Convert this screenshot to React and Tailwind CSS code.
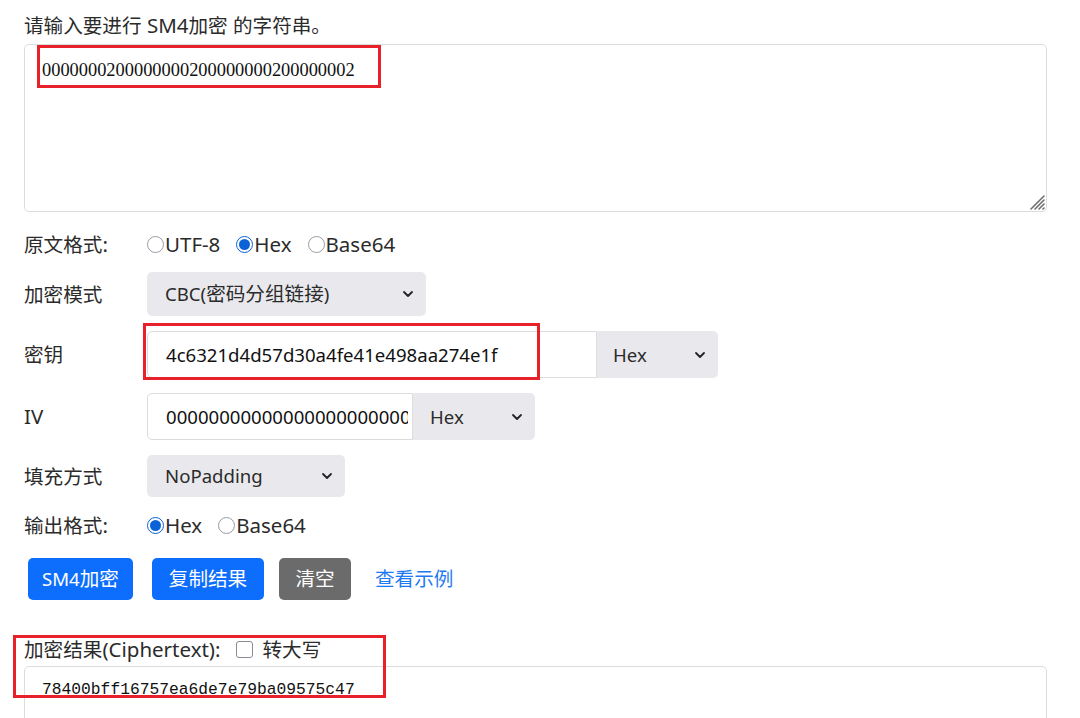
import React from "react";

const UI = { fontFamily: '"Noto Sans", "Noto Sans CJK SC", sans-serif' };

function T({ children }) {
  const parts = String(children).split(/([\u3000-\u303f\u4e00-\u9fff\uff00-\uffef]+)/);
  return (
    <>
      {parts.map((p, i) =>
        i % 2 === 1 ? (
          <span key={i} className="text-[19.6px]">{p}</span>
        ) : (
          <React.Fragment key={i}>{p}</React.Fragment>
        )
      )}
    </>
  );
}

function Chevron() {
  return (
    <svg width="12" height="8" viewBox="0 0 12 8">
      <path d="M2 2 L6 6 L10 2" fill="none" stroke="#222" strokeWidth="1.8" strokeLinecap="round" strokeLinejoin="round" />
    </svg>
  );
}

function Radio({ checked, label }) {
  return (
    <span className="flex items-center">
      {checked ? (
        <span className="w-[17px] h-[17px] rounded-full border-[1.5px] border-[#0b62d6] p-[2px] flex">
          <span className="w-full h-full rounded-full bg-[#0b62d6]" />
        </span>
      ) : (
        <span className="w-[17px] h-[17px] rounded-full border border-[#9a9aa4] bg-white" />
      )}
      <span className="ml-[1px]">{label}</span>
    </span>
  );
}

function Select({ text, width, className = "" }) {
  return (
    <div
      className={`flex items-center justify-between bg-[#e9e9ed] pr-[12px] text-[18.6px] ${className}`}
      style={{ width }}
    >
      <span><T>{text}</T></span>
      <Chevron />
    </div>
  );
}

function Label({ children }) {
  return <span className="w-[123px] shrink-0"><T>{children}</T></span>;
}

export default function App() {
  return (
    <div style={UI} className="bg-white text-[#2b2b2b] text-[20.5px] w-[1080px] h-[718px] overflow-hidden pl-[24px] pr-[33px]">
      <div className="pt-[12px] leading-[26px] h-[44px]"><T>请输入要进行 SM4加密 的字符串。</T></div>
      <div className="relative">
        <textarea
          readOnly
          value="0000000200000000200000000200000002"
          className="block w-full h-[168px] border border-[#dcdcdc] rounded-[5px] pl-[17px] pt-[12px] text-[18.4px] leading-[26px] text-[#111] outline-none resize-none"
          style={{ fontFamily: '"Liberation Serif", serif' }}
        />
        <svg className="absolute right-[2px] bottom-[2px]" width="16" height="16" viewBox="0 0 16 16">
          <path d="M2 15 L15 2 M6 15 L15 6 M10 15 L15 10 M14 15 L15 14" stroke="#6f6f6f" strokeWidth="1.6" strokeLinecap="round" />
        </svg>
        <div className="absolute left-[13px] top-[1px] w-[344px] h-[43px] border-[3px] border-[#e8202a] pointer-events-none" />
      </div>

      <div className="flex items-center h-[32px] mt-[16px]">
        <Label>原文格式:</Label>
        <div className="flex items-center gap-[16px]">
          <Radio label="UTF-8" />
          <Radio checked label="Hex" />
          <Radio label="Base64" />
        </div>
      </div>

      <div className="flex items-center mt-[12px]">
        <Label>加密模式</Label>
        <Select text="CBC(密码分组链接)" width={279} className="h-[44px] rounded-[5px] pl-[18px]" />
      </div>

      <div className="flex items-center mt-[15px]">
        <Label>密钥</Label>
        <div className="relative flex">
          <input
            readOnly
            value="4c6321d4d57d30a4fe41e498aa274e1f"
            className="w-[450px] h-[47px] bg-white border border-[#dcdcdc] rounded-l-[5px] pl-[18px] text-[18.6px] text-[#111] outline-none"
          />
          <Select text="Hex" width={121} className="h-[47px] rounded-r-[5px] pl-[16px]" />
          <div className="absolute left-[-4px] top-[-8px] w-[397px] h-[57px] border-[3px] border-[#e8202a] pointer-events-none" />
        </div>
      </div>

      <div className="flex items-center mt-[15px]">
        <Label>IV</Label>
        <div className="flex">
          <input
            readOnly
            value="00000000000000000000000000000000"
            className="w-[266px] h-[47px] bg-white border border-[#dcdcdc] rounded-l-[5px] pl-[18px] pr-[4px] text-[18.6px] text-[#111] outline-none"
          />
          <Select text="Hex" width={122} className="h-[47px] rounded-r-[5px] pl-[17px]" />
        </div>
      </div>

      <div className="flex items-center mt-[15px]">
        <Label>填充方式</Label>
        <Select text="NoPadding" width={198} className="h-[42px] rounded-[5px] pl-[18px]" />
      </div>

      <div className="flex items-center h-[32px] mt-[12px]">
        <Label>输出格式:</Label>
        <div className="flex items-center gap-[16px]">
          <Radio checked label="Hex" />
          <Radio label="Base64" />
        </div>
      </div>

      <div className="flex items-center mt-[17px] pl-[4px] text-[18.6px]">
        <button className="h-[42px] w-[105px] rounded-[5px] bg-[#0d6efd] text-white"><T>SM4加密</T></button>
        <button className="h-[42px] w-[112px] ml-[19px] rounded-[5px] bg-[#0d6efd] text-white"><T>复制结果</T></button>
        <button className="h-[42px] w-[72px] ml-[15px] rounded-[5px] bg-[#6b6b6b] text-white"><T>清空</T></button>
        <a className="ml-[24px] text-[#1f7af2]"><T>查看示例</T></a>
      </div>

      <div className="relative mt-[36px]">
        <div className="flex items-center h-[26px]">
          <span><T>加密结果(Ciphertext):</T></span>
          <span className="ml-[15px] w-[17px] h-[17px] rounded-[3px] border border-[#8a8a94] bg-white" />
          <span className="ml-[10px]"><T>转大写</T></span>
        </div>
        <div className="mt-[4px] h-[80px] border border-[#dcdcdc] rounded-[5px] pl-[17px] pt-[10px] text-[16.3px] leading-[26px] text-[#111]" style={{ fontFamily: '"Liberation Mono", monospace' }}>
          78400bff16757ea6de7e79ba09575c47
        </div>
        <div className="absolute left-[-11px] top-[-1px] w-[373px] h-[63px] border-[3px] border-[#e8202a] pointer-events-none" />
      </div>
    </div>
  );
}
